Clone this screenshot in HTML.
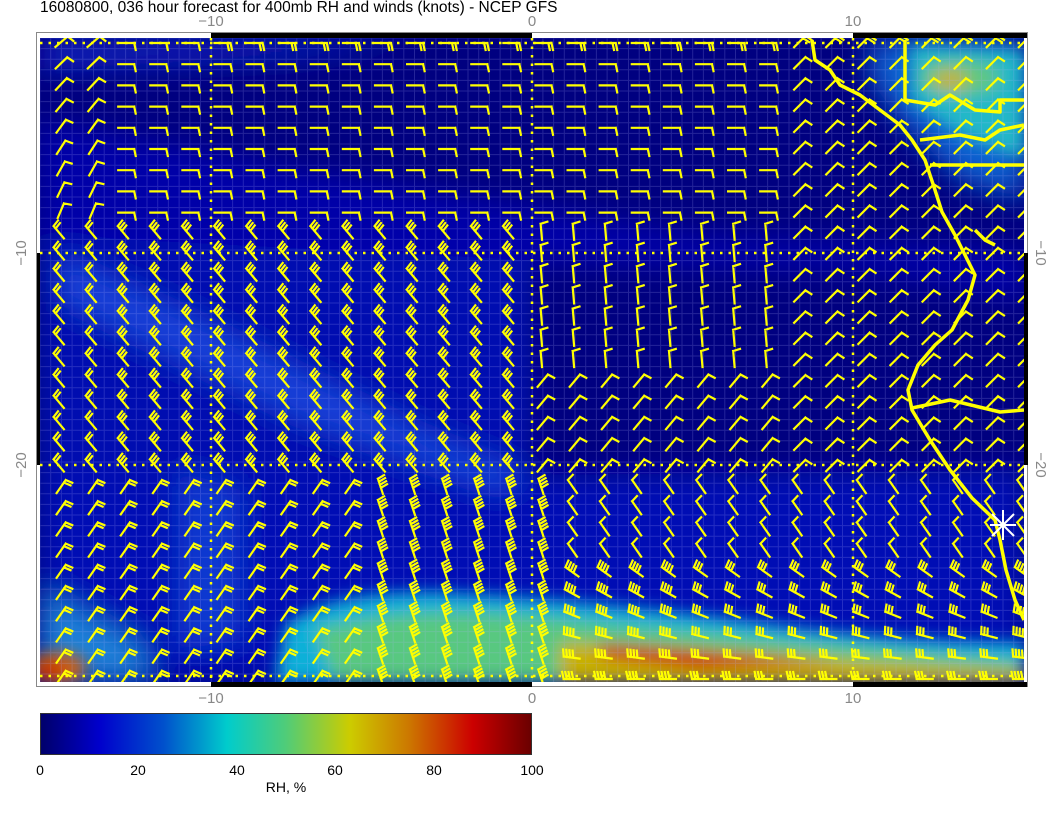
<!DOCTYPE html>
<html><head><meta charset="utf-8">
<style>
html,body{margin:0;padding:0;background:#fff;width:1056px;height:816px;overflow:hidden}
svg text{font-family:"Liberation Sans",sans-serif}
</style></head>
<body>
<svg id="s" width="1056" height="816" viewBox="0 0 1056 816" xmlns="http://www.w3.org/2000/svg">
<defs>
<filter id="b8" filterUnits="userSpaceOnUse" x="0" y="0" width="1056" height="816"><feGaussianBlur stdDeviation="8"/></filter>
<filter id="b14" filterUnits="userSpaceOnUse" x="0" y="0" width="1056" height="816"><feGaussianBlur stdDeviation="14"/></filter>
<clipPath id="pc"><rect x="40" y="38" width="984" height="644"/></clipPath>
<linearGradient id="jet" x1="0" x2="1" y1="0" y2="0">
<stop offset="0" stop-color="#00006a"/>
<stop offset="0.12" stop-color="#0000cc"/>
<stop offset="0.25" stop-color="#0050cc"/>
<stop offset="0.38" stop-color="#00cccc"/>
<stop offset="0.5" stop-color="#50cc78"/>
<stop offset="0.63" stop-color="#cccc00"/>
<stop offset="0.75" stop-color="#cc7800"/>
<stop offset="0.88" stop-color="#cc0000"/>
<stop offset="1" stop-color="#6a0000"/>
</linearGradient>
</defs>
<text x="40" y="12" font-size="15.5" fill="#000">16080800, 036 hour forecast for 400mb RH and winds (knots) - NCEP GFS</text>
<rect x="36.5" y="32.5" width="991" height="654" fill="#fff" stroke="#888" stroke-width="1"/>
<rect x="211" y="33" width="321" height="5" fill="#000"/>
<rect x="853" y="33" width="174" height="5" fill="#000"/>
<rect x="211" y="682" width="321" height="5" fill="#000"/>
<rect x="853" y="682" width="174" height="5" fill="#000"/>
<rect x="37" y="253" width="3" height="212" fill="#000"/>
<rect x="1024" y="253" width="4" height="212" fill="#000"/>
<g clip-path="url(#pc)">
<rect x="40" y="38" width="984" height="644" fill="#000080"/>
<g filter="url(#b14)">
<path d="M40 40 L420 40 L300 58 L40 70Z" fill="#0a24c0"/>
<path d="M40 120 L300 170 L700 235 L1024 250 L1024 300 L860 270 L540 262 L300 260 L40 240Z" fill="#0004a8"/>
<path d="M40 235 L530 260 L530 480 L40 480Z" fill="#0008b0"/>
<path d="M40 480 L1024 470 L1024 682 L40 682Z" fill="#000cb4"/>
<path d="M60 255 L200 320 L420 430 L530 475 L500 492 L300 420 L60 300Z" fill="#1440d8"/>
<path d="M180 470 L240 490 L240 640 L180 650Z" fill="#0c38d0"/>
<path d="M40 590 L140 645 L150 682 L40 682Z" fill="#1a80d8"/>
<path d="M870 40 L1024 40 L1024 200 L960 180 L900 120 L870 80Z" fill="#0a60d0"/>
</g>
<g filter="url(#b8)">
<path d="M910 45 L1024 50 L1024 160 L960 135 L910 100Z" fill="#20b8c8"/>
<ellipse cx="960" cy="78" rx="40" ry="18" fill="#60c880"/>
<ellipse cx="950" cy="80" rx="18" ry="10" fill="#c8b030"/>
<path d="M285 625 Q330 590 440 592 Q620 602 800 628 Q920 642 1024 642 L1024 682 L275 682Z" fill="#10b0d8"/>
<path d="M315 630 Q400 605 520 615 Q700 632 1024 662 L1024 682 L335 682Z" fill="#58c880"/>
<path d="M560 642 Q700 647 860 661 L1024 671 L1024 682 L560 682Z" fill="#c8b000"/>
<path d="M600 644 Q700 650 840 663 L700 669 L600 657Z" fill="#cc1400"/>
<ellipse cx="58" cy="668" rx="28" ry="16" fill="#d06010"/>
<ellipse cx="48" cy="672" rx="14" ry="10" fill="#c82000"/>
</g>
<g id="grid" stroke="#b4b4ff" stroke-opacity="0.2" stroke-width="1"></g>
<g stroke="#ffff00" stroke-width="2.5" stroke-dasharray="2.5 6" fill="none">
<line x1="211" y1="38" x2="211" y2="682"/><line x1="532" y1="38" x2="532" y2="682"/><line x1="853" y1="38" x2="853" y2="682"/>
<line x1="40" y1="253" x2="1024" y2="253"/><line x1="40" y1="465" x2="1024" y2="465"/>
<line x1="40" y1="43" x2="1024" y2="43"/><line x1="40" y1="676" x2="1024" y2="676"/>
</g>
<g id="barbs" stroke="#ffff00" stroke-width="2.2" fill="none" stroke-linecap="square"></g>
<g stroke="#ffff00" stroke-width="3.5" fill="none" stroke-linejoin="round">
<path d="M812 40 L815 60 L830 70 L840 85 L860 95 L880 110 L900 125 L912 140 L925 160 L935 190 L942 212 L955 235 L965 255 L975 275 L968 300 L952 330 L935 345 L918 365 L908 390 L912 410 L930 440 L950 470 L972 498 L995 520 L1000 540 L1006 570 L1015 600 L1024 620"/>
<path d="M905 40 L905 100 L935 105 L950 95 L975 110 L1000 112 L1000 100 L1024 100"/>
<path d="M920 140 L960 135 L985 140 L1000 130 L1024 125"/>
<path d="M930 165 L1024 165"/>
<path d="M912 408 L950 400 L1000 412 L1024 410"/>
<path d="M975 230 L985 240 L995 245"/>
</g>
<g stroke="#fff" stroke-width="2">
<line x1="990" y1="525" x2="1016" y2="525"/><line x1="1003" y1="510" x2="1003" y2="540"/>
<line x1="992" y1="514" x2="1014" y2="536"/><line x1="992" y1="536" x2="1014" y2="514"/>
</g>
</g>
<g font-size="15" fill="#888" text-anchor="middle">
<text x="211" y="26">−10</text><text x="532" y="26">0</text><text x="853" y="26">10</text>
<text x="211" y="703">−10</text><text x="532" y="703">0</text><text x="853" y="703">10</text>
<text transform="translate(26,253) rotate(-90)">−10</text>
<text transform="translate(26,465) rotate(-90)">−20</text>
<text transform="translate(1036,253) rotate(90)">−10</text>
<text transform="translate(1036,465) rotate(90)">−20</text>
</g>
<rect x="40.5" y="713.5" width="491" height="41" fill="url(#jet)" stroke="#333" stroke-width="1"/>
<g font-size="14" fill="#000" text-anchor="middle">
<text x="40" y="775">0</text><text x="138" y="775">20</text><text x="237" y="775">40</text>
<text x="335" y="775">60</text><text x="434" y="775">80</text><text x="532" y="775">100</text>
<text x="286" y="792">RH, %</text>
</g>
</svg>
<script>
(function(){
var NS="http://www.w3.org/2000/svg";
var g=document.getElementById("grid"),d="";
for(var x=40;x<1024;x+=10.7)d+="M"+x.toFixed(1)+" 38V682";
for(var y=38;y<682;y+=10.6)d+="M40 "+y.toFixed(1)+"H1024";
var p=document.createElementNS(NS,"path");p.setAttribute("d",d);g.appendChild(p);
function ang(x,y){
 if(y<230){ if(x>790) return -45; if(x<110) return -40-(y-40)/190*30; return 0; }
 if(y<480){ if(x>790) return -45; if(x>540) return (y<370?-95:-50); return -130; }
 if(x<360) return -55; if(x<560) return -108;
 if(y<560) return -125;
 return -140-(y-560)/120*40;
}
function cnt(x,y){
 if(y<230) return (y<60&&x>200)?2:1;
 if(y<480){ if(x<540) return x<100?2:3; return 1; }
 if(x<360) return 2; if(x<560) return 4;
 if(y<560) return 1; return 3+((x|0)%2);
}
var b=document.getElementById("barbs"),s="";
for(var i=0;i<31;i++)for(var j=0;j<31;j++){
 var x=60+32.1*i,y=43+21.2*j;
 var a=ang(x,y)*Math.PI/180,c=cnt(x,y);
 var dx=Math.cos(a),dy=Math.sin(a),px=-dy,py=dx,L=16;
 var sx=x-dx*6,sy=y-dy*6;
 var ex=sx+dx*L,ey=sy+dy*L;
 s+="M"+sx.toFixed(1)+" "+sy.toFixed(1)+"L"+ex.toFixed(1)+" "+ey.toFixed(1);
 for(var k=0;k<c;k++){
  var bx=ex-dx*3.2*k,by=ey-dy*3.2*k;
  s+="M"+bx.toFixed(1)+" "+by.toFixed(1)+"l"+(px*7+dx*1.5).toFixed(1)+" "+(py*7+dy*1.5).toFixed(1);
 }
}
var q=document.createElementNS(NS,"path");q.setAttribute("d",s);b.appendChild(q);
})();
</script>
</body></html>
